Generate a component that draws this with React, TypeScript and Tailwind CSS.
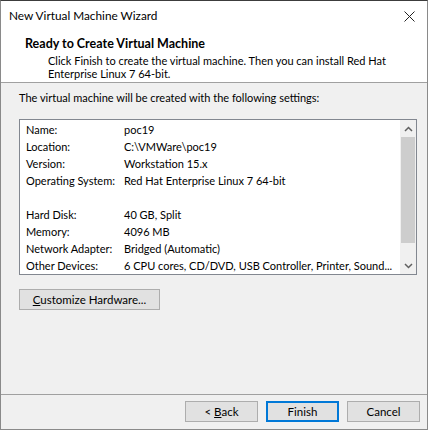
import React from "react";

interface Setting {
  label: string;
  value: string;
}

const settings: (Setting | null)[] = [
  { label: "Name:", value: "poc19" },
  { label: "Location:", value: "C:\\VMWare\\poc19" },
  { label: "Version:", value: "Workstation 15.x" },
  { label: "Operating System:", value: "Red Hat Enterprise Linux 7 64-bit" },
  null,
  { label: "Hard Disk:", value: "40 GB, Split" },
  { label: "Memory:", value: "4096 MB" },
  { label: "Network Adapter:", value: "Bridged (Automatic)" },
  { label: "Other Devices:", value: "6 CPU cores, CD/DVD, USB Controller, Printer, Sound..." },
];

const WinButton: React.FC<{ primary?: boolean; children: React.ReactNode }> = ({ primary, children }) => (
  <button
    type="button"
    className={
      primary
        ? "h-[21px] w-[73px] bg-[#e1e1e1] border-2 border-[#0078d7] text-[11.5px] leading-none flex items-center justify-center"
        : "h-[21px] w-[73px] bg-[#e1e1e1] border border-[#adadad] text-[11.5px] leading-none flex items-center justify-center"
    }
  >
    {children}
  </button>
);

const App: React.FC = () => {
  return (
    <div
      className="w-[428px] h-[430px] flex flex-col bg-[#f0f0f0] border border-[#8a8a8a] border-t-[#3c3c3c] text-black text-[11px] overflow-hidden"
      style={{ fontFamily: 'Lato, "Noto Sans", sans-serif' }}
    >
      {/* title bar */}
      <div className="h-[29px] bg-white flex items-center justify-between pl-[8px] pr-[12px]">
        <span className="text-[11.8px]">New Virtual Machine Wizard</span>
        <svg width="11" height="11" viewBox="0 0 11 11" className="mt-[1px]">
          <path d="M0.5 0.5 L10.5 10.5 M10.5 0.5 L0.5 10.5" stroke="#222" strokeWidth="1" />
        </svg>
      </div>

      {/* header */}
      <div className="h-[53px] bg-white border-b border-[#a0a0a0] pl-[24px] pt-[7px] leading-[14px]">
        <div className="font-bold text-[12.5px]">Ready to Create Virtual Machine</div>
        <div className="pl-[23px] mt-[3px] leading-[13px]">
          Click Finish to create the virtual machine. Then you can install Red Hat
          <br />
          Enterprise Linux 7 64-bit.
        </div>
      </div>

      {/* body */}
      <div className="flex-1 flex flex-col px-[18px] pt-[8px]">
        <div className="leading-[14px]">The virtual machine will be created with the following settings:</div>

        <div className="mt-[14px] h-[156px] w-[398px] bg-white border border-[#828790] flex">
          <div className="flex-1 pl-[6px] pt-[2px]">
            {settings.map((s, i) =>
              s ? (
                <div key={i} className="h-[17px] flex items-center whitespace-nowrap">
                  <span className="w-[98px] shrink-0">{s.label}</span>
                  <span>{s.value}</span>
                </div>
              ) : (
                <div key={i} className="h-[17px]" />
              )
            )}
          </div>
          <div className="w-[17px] flex flex-col bg-[#f0f0f0] border-l border-white">
            <div className="h-[17px] flex items-center justify-center">
              <svg width="9" height="6" viewBox="0 0 9 6">
                <path d="M1 5 L4.5 1.5 L8 5" fill="none" stroke="#606060" strokeWidth="1.5" />
              </svg>
            </div>
            <div className="h-[106px] mx-[1px] bg-[#cdcdcd]" />
            <div className="flex-1" />
            <div className="h-[17px] flex items-center justify-center">
              <svg width="9" height="6" viewBox="0 0 9 6">
                <path d="M1 1 L4.5 4.5 L8 1" fill="none" stroke="#606060" strokeWidth="1.5" />
              </svg>
            </div>
          </div>
        </div>

        <div className="mt-[14px]">
          <button
            type="button"
            className="h-[21px] w-[141px] bg-[#e1e1e1] border border-[#adadad] text-[11.5px] leading-none flex items-center justify-center"
          >
            <span>
              <span className="underline">C</span>ustomize Hardware...
            </span>
          </button>
        </div>
      </div>

      {/* footer */}
      <div className="h-[35px] border-t border-[#a0a0a0] flex justify-end items-start pt-[6px] pr-[7px] gap-[8px]">
        <WinButton>
          <span>
            &lt; <span className="underline">B</span>ack
          </span>
        </WinButton>
        <WinButton primary>Finish</WinButton>
        <WinButton>Cancel</WinButton>
      </div>
    </div>
  );
};

export default App;
